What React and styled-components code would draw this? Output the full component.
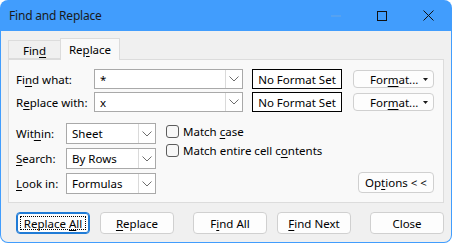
import React from "react"
import styled, { createGlobalStyle } from "styled-components"

const Global = createGlobalStyle`
  html, body { margin: 0; padding: 0; background: #ffffff; }
  body { font-family: "Noto Sans", "Open Sans", sans-serif; font-size: 11.5px; color: #000; }
  * { box-sizing: border-box; }
`;

const Window = styled.div`
  width: 452px;
  height: 243px;
  background: #419dfd;
  border-radius: 8px;
  padding: 0 1px 1px 1px;
  display: flex;
  flex-direction: column;
  overflow: hidden;`;

const TitleBar = styled.div`
  height: 31px;
  flex: none;
  display: flex;
  align-items: center;
  padding-left: 8px;
  color: #1a1a1a;`;

const Title = styled.div`
  flex: 1;
  font-size: 12px;
  letter-spacing: -0.2px;`;

const CaptionBtn = styled.div`
  width: 46px;
  height: 31px;
  display: flex;
  align-items: center;
  justify-content: center;`;

const Body = styled.div`
  flex: 1;
  background: #f0f0f0;
  border-radius: 0 0 7px 7px;
  padding: 7px 7px 0 7px;
  display: flex;
  flex-direction: column;`;

const Tabs = styled.div`
  display: flex;
  align-items: flex-end;
  height: 21px;
  position: relative;
  z-index: 1;`;

const Tab = styled.div`
  height: ${p => (p.active ? 22 : 19)}px;
  width: ${p => p.w}px;
  margin-bottom: ${p => (p.active ? -1 : 0)}px;
  background: ${p => (p.active ? "#f9f9f9" : "#f0f0f0")};
  border: 1px solid #dcdcdc;
  border-bottom: ${p => (p.active ? "none" : "1px solid #dcdcdc")};
  ${p => (p.active ? "" : "border-right: none;")}
  display: flex;
  align-items: center;
  justify-content: center;
  padding-top: ${p => (p.active ? 0 : 2)}px;`;

const Panel = styled.div`
  height: 144px;
  width: 436px;
  background: #f9f9f9;
  border: 1px solid #dcdcdc;
  padding: 9px 0 0 7px;
  display: flex;
  flex-direction: column;`;

const Row = styled.div`
  display: flex;
  align-items: center;
  height: 20px;
  margin-bottom: 3px;`;

const Label = styled.div`
  width: ${p => p.w}px;
  flex: none;
  white-space: nowrap;`;

const Text = styled.span`
  white-space: pre;`;

const U = styled.span`
  text-decoration: underline;
  text-underline-offset: 2px;`;

const Combo = styled.div`
  width: ${p => p.w}px;
  height: ${p => p.h}px;
  flex: none;
  background: #ffffff;
  border: 1px solid #a9a9a9;
  display: flex;
  align-items: stretch;`;

const ComboText = styled.div`
  flex: 1;
  padding-left: 5px;
  display: flex;
  align-items: center;`;

const ComboArrow = styled.div`
  width: 17px;
  border-left: 1px solid #dadada;
  display: flex;
  align-items: center;
  justify-content: center;`;

const FormatBox = styled.div`
  width: 90px;
  height: 20px;
  flex: none;
  margin-left: 9px;
  border: 1px solid #000;
  background: #ffffff;
  display: flex;
  align-items: center;
  justify-content: center;`;

const FormatButton = styled.div`
  width: 81px;
  height: 18px;
  flex: none;
  margin-left: 11px;
  border: 1px solid #d0d0d0;
  border-radius: 4px;
  background: #fdfdfd;
  display: flex;
  align-items: center;
  justify-content: space-between;
  padding: 0 5px 0 16px;`;

const Lower = styled.div`
  display: flex;
  margin-top: 8px;`;

const LeftCol = styled.div`
  display: flex;
  flex-direction: column;
  gap: 4px;`;

const SmallRow = styled.div`
  display: flex;
  align-items: center;`;

const Checks = styled.div`
  display: flex;
  flex-direction: column;
  gap: 6px;
  margin-left: 10px;
  margin-top: 2px;`;

const CheckRow = styled.div`
  display: flex;
  align-items: center;
  height: 13px;
  gap: 4px;`;

const Box = styled.div`
  width: 13px;
  height: 13px;
  flex: none;
  border: 1px solid #5c5c5c;
  border-radius: 3px;
  background: #f7f7f7;`;

const OptionsWrap = styled.div`
  flex: 1;
  display: flex;
  align-items: flex-end;
  justify-content: flex-end;
  padding-right: 9px;
  padding-bottom: 1px;`;

const Button = styled.div`
  width: ${p => p.w || 74}px;
  height: ${p => p.h || 22}px;
  flex: none;
  margin-left: ${p => p.gap || 0}px;
  border: 1px solid ${p => (p.focus ? "#1f7bd6" : "#d0d0d0")};
  box-shadow: ${p => (p.focus ? "inset 0 0 0 1px #1f7bd6" : "none")};
  border-radius: 4px;
  background: #fdfdfd;
  display: flex;
  align-items: center;
  justify-content: center;
  position: relative;`;

const FocusRing = styled.div`
  position: absolute;
  inset: 3px;
  border: 1px dotted #000;`;

const ButtonRow = styled.div`
  display: flex;
  padding: 9px 0 0 8px;`;

const Chevron = () => (
  <svg width="10" height="6" viewBox="0 0 10 6">
    <polyline points="0.5,0.5 5,5 9.5,0.5" fill="none" stroke="#6d6d6d" strokeWidth="1" />
  </svg>
);

const Caret = () => (
  <svg width="5" height="3" viewBox="0 0 5 3">
    <polygon points="0,0 5,0 2.5,3" fill="#1a1a1a" />
  </svg>
);

const Dropdown = ({ w, h, children }) => (
  <Combo w={w} h={h}>
    <ComboText>{children}</ComboText>
    <ComboArrow><Chevron /></ComboArrow>
  </Combo>
);

export default function App() {
  return (
    <>
      <Global />
      <Window>
        <TitleBar>
          <Title>Find and Replace</Title>
          <CaptionBtn>
            <svg width="10" height="2" viewBox="0 0 10 2"><line x1="0" y1="1" x2="10" y2="1" stroke="#6aa7e6" strokeWidth="1" /></svg>
          </CaptionBtn>
          <CaptionBtn>
            <svg width="10" height="10" viewBox="0 0 10 10"><rect x="0.5" y="0.5" width="9" height="9" fill="none" stroke="#111" strokeWidth="1" /></svg>
          </CaptionBtn>
          <CaptionBtn>
            <svg width="11" height="11" viewBox="0 0 11 11"><path d="M0.5 0.5 L10.5 10.5 M10.5 0.5 L0.5 10.5" stroke="#111" strokeWidth="1" /></svg>
          </CaptionBtn>
        </TitleBar>
        <Body>
          <Tabs>
            <Tab w={52}><Text>Fin<U>d</U></Text></Tab>
            <Tab w={60} active><Text>Re<U>p</U>lace</Text></Tab>
          </Tabs>
          <Panel>
            <Row>
              <Label w={78}>Fi<U>n</U>d what:</Label>
              <Dropdown w={149} h={20}>*</Dropdown>
              <FormatBox>No Format Set</FormatBox>
              <FormatButton><Text>For<U>m</U>at...</Text><Caret /></FormatButton>
            </Row>
            <Row>
              <Label w={78}>R<U>e</U>place with:</Label>
              <Dropdown w={149} h={20}>x</Dropdown>
              <FormatBox>No Format Set</FormatBox>
              <FormatButton><Text>For<U>m</U>at...</Text><Caret /></FormatButton>
            </Row>
            <Lower>
              <LeftCol>
                <SmallRow>
                  <Label w={50}>Wit<U>h</U>in:</Label>
                  <Dropdown w={90} h={21}>Sheet</Dropdown>
                </SmallRow>
                <SmallRow>
                  <Label w={50}><U>S</U>earch:</Label>
                  <Dropdown w={90} h={21}>By Rows</Dropdown>
                </SmallRow>
                <SmallRow>
                  <Label w={50}><U>L</U>ook in:</Label>
                  <Dropdown w={90} h={21}>Formulas</Dropdown>
                </SmallRow>
              </LeftCol>
              <Checks>
                <CheckRow><Box /><Text>Match <U>c</U>ase</Text></CheckRow>
                <CheckRow><Box /><Text>Match entire cell c<U>o</U>ntents</Text></CheckRow>
              </Checks>
              <OptionsWrap>
                <Button w={76} h={21}><Text>Op<U>t</U>ions &lt; &lt;</Text></Button>
              </OptionsWrap>
            </Lower>
          </Panel>
          <ButtonRow>
            <Button focus><FocusRing /><Text>Replace <U>A</U>ll</Text></Button>
            <Button gap={10}><Text><U>R</U>eplace</Text></Button>
            <Button gap={19}><Text>F<U>i</U>nd All</Text></Button>
            <Button gap={10}><Text><U>F</U>ind Next</Text></Button>
            <Button gap={19}>Close</Button>
          </ButtonRow>
        </Body>
      </Window>
    </>
  )
}
